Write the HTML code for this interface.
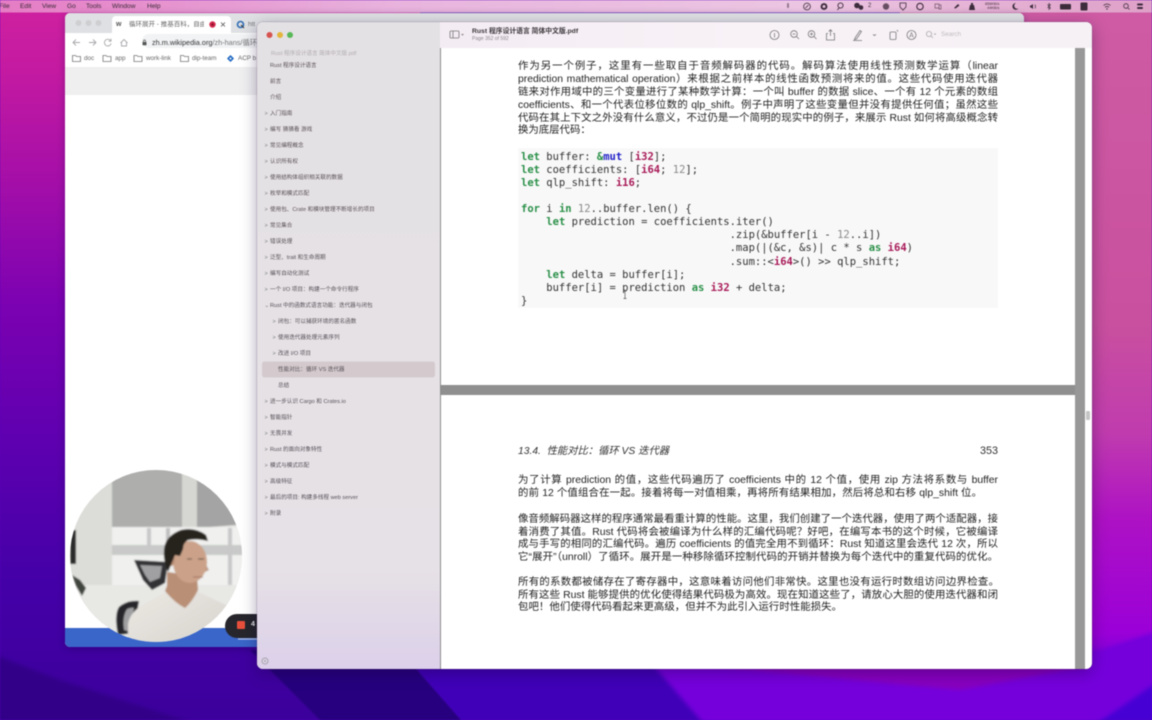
<!DOCTYPE html>
<html lang="zh"><head><meta charset="utf-8"><title>Rust PDF</title>
<style>
html,body{margin:0;padding:0;width:1152px;height:720px;overflow:hidden;background:#5a00c0}
#w{position:absolute;left:0;top:0;width:1152px;height:720px;overflow:hidden;filter:blur(.42px);font-family:"Liberation Sans","Noto Sans CJK SC",sans-serif}
.a{position:absolute;white-space:nowrap}
.l{position:absolute;left:518px;width:480px;height:13px;margin-top:1.3px;line-height:13px;font-size:10.4px;color:#222;white-space:nowrap;text-align:justify;text-align-last:justify}
.s{position:absolute;left:270px;height:10px;margin-top:1px;line-height:10px;font-size:5.6px;color:#555055;white-space:nowrap}
.s i{position:absolute;left:-5.500px;top:0;font-style:normal;font-size:5.500px;color:#777}
.s.u{left:278px}
.s.n{left:278px}
pre{position:absolute;left:521px;top:150.800px;margin:0;font:10.5px/13.1px "DejaVu Sans Mono","Liberation Mono",monospace;color:#333}
b.g{color:#2a9048;font-weight:700}b.m{color:#a81a58;font-weight:700}b.b{color:#2222c8;font-weight:700}u{text-decoration:none;color:#8a8a8a}
.ic{position:absolute;left:0;top:0}
</style></head><body><div id="w">
<svg class="ic" width="1152" height="720" viewBox="0 0 1152 720">
<defs>
<linearGradient id="lf" x1="0" y1="0" x2="0" y2="1"><stop offset="0" stop-color="#d022a0"/><stop offset=".1" stop-color="#c41aa2"/><stop offset=".25" stop-color="#a50fa8"/><stop offset=".42" stop-color="#7c02b2"/><stop offset=".6" stop-color="#6000b0"/><stop offset=".8" stop-color="#4500a8"/><stop offset="1" stop-color="#3c009c"/></linearGradient>
<linearGradient id="rt" x1="0" y1="0" x2="0" y2="1"><stop offset="0" stop-color="#cf5ca4"/><stop offset=".45" stop-color="#c9509f"/><stop offset=".6" stop-color="#c03cae"/><stop offset=".72" stop-color="#ae12c4"/><stop offset=".88" stop-color="#9a00d8"/><stop offset=".96" stop-color="#5a00d8"/><stop offset="1" stop-color="#4800d0"/></linearGradient>
<linearGradient id="mb" x1="0" y1="0" x2="1" y2="0"><stop offset="0" stop-color="#e57cc4"/><stop offset=".35" stop-color="#e8b4de"/><stop offset=".7" stop-color="#ecc6e2"/><stop offset="1" stop-color="#dfa0c8"/></linearGradient>
<linearGradient id="sb" x1="0" y1="0" x2="0" y2="1"><stop offset="0" stop-color="#e4e1e4"/><stop offset=".85" stop-color="#e6e1e6"/><stop offset="1" stop-color="#dcd0ea"/></linearGradient>
<linearGradient id="sh" x1="0" y1="0" x2="1" y2="1"><stop offset="0" stop-color="#ebe8e3"/><stop offset="1" stop-color="#d6d2cc"/></linearGradient>
<filter id="f3"><feGaussianBlur stdDeviation="2"/></filter><filter id="f1"><feGaussianBlur stdDeviation=".9"/></filter>
<clipPath id="cc"><circle cx="156" cy="556" r="86"/></clipPath>
</defs>
<rect width="1152" height="720" fill="#4200b0"/>
<rect width="420" height="720" fill="url(#lf)"/>
<rect x="900" width="252" height="720" fill="url(#rt)"/>
<polygon points="-5,655 60,680 215,730 -5,730" fill="#300088" filter="url(#f3)"/>
<polygon points="250,650 400,650 470,730 330,730" fill="#28007e" filter="url(#f1)"/>
<polygon points="400,650 643,650 709,730 470,730" fill="#3f00b8" filter="url(#f1)"/>
<polygon points="640,650 1100,650 1160,630 1160,700 1080,730 709,730" fill="#7400dc" filter="url(#f3)"/>
<polygon points="700,665 1092,665 960,690" fill="#8800c0" filter="url(#f3)"/>
<polygon points="1095,725 1160,680 1160,725" fill="#4600d4" filter="url(#f3)"/>
<rect width="1152" height="12.5" fill="url(#mb)"/>
</svg>

<!-- menu bar -->
<div class="a" style="left:0;top:2px;font-size:6.6px;line-height:9px;color:#3a2a38;height:9px;width:170px">
<span class="a" style="left:-1px">File</span><span class="a" style="left:20px">Edit</span><span class="a" style="left:42px">View</span><span class="a" style="left:67px">Go</span><span class="a" style="left:86px">Tools</span><span class="a" style="left:112px">Window</span><span class="a" style="left:147px">Help</span></div>
<svg class="ic" width="1152" height="13" viewBox="0 0 1152 13" fill="#3c2c3c" stroke="#3c2c3c">
<rect x="787" y="3" width="2" height="5" rx="1" opacity=".5" stroke="none"/>
<circle cx="807" cy="6.5" r="3.4" fill="none" stroke-width=".8"/><path d="M805.5 8l3-3" stroke-width=".8"/>
<circle cx="824" cy="6.5" r="3.4" stroke="none"/><circle cx="824" cy="6.5" r="1.5" fill="#e8c0dc" stroke="none"/>
<circle cx="840.500" cy="5.500" r="2.600" fill="none" stroke-width=".9"/><path d="M839 8l-1.600 2" stroke-width=".9"/>
<circle cx="857" cy="5.500" r="2.800" stroke="none"/><circle cx="861" cy="7.500" r="2.300" stroke="none"/>
<circle cx="886" cy="6.500" r="3.200" stroke="none" opacity=".75"/>
<path d="M900 3h6v4l-3 3-3-3z" fill="none" stroke-width=".8"/>
<circle cx="920" cy="6.500" r="3.200" fill="none" stroke-width="1.100"/>
<path d="M935 4h4v4h-4zM939 5h2v4h-2z" fill="none" stroke-width=".7" opacity=".7"/>
<path d="M954 8l4-4 1.500 1.500-4 3z" stroke="none"/>
<path d="M969 10l1-5h1V3h2v2h1l1 5z" stroke="none"/>
<path d="M1016 3a3.400 3.400 0 1 0 2.500 5.500 3 3 0 0 1-2.500-5.500z" stroke="none"/>
<path d="M1030 5.500h1l2-1.500v5l-2-1.500h-1z" stroke="none"/><path d="M1035 4.500q1 2 0 4" fill="none" stroke-width=".6"/>
<path d="M1047.500 4.500l3 3.500-1.500 1.500V3.500l1.500 1.500-3 3" fill="none" stroke-width=".6"/>
<rect x="1060" y="4" width="11" height="5.500" rx="1" stroke="none"/>
<rect x="1080.500" y="2.500" width="7" height="8" rx="1" stroke="none"/>
<path d="M1103.500 5.500q3.500-3 7 0M1105 7.300q2-1.700 4 0" fill="none" stroke-width=".8"/><circle cx="1107" cy="9" r=".7" stroke="none"/>
<circle cx="1126" cy="6" r="2.300" fill="none" stroke-width=".8"/><path d="M1128 8l1.500 1.500" stroke-width=".8"/>
<rect x="1137" y="3.500" width="6" height="2" rx="1" stroke="none"/><rect x="1137" y="7" width="6" height="2" rx="1" stroke="none"/>
</svg>
<div class="a" style="left:868px;top:3px;font-size:6px;line-height:7px;color:#3c2c3c">2</div>
<div class="a" style="left:985px;top:1.500px;font-size:3.800px;line-height:4.500px;color:#3c2c3c;text-align:right">856KB/s<br>44KB/s</div>

<!-- chrome window -->
<div class="a" style="left:65px;top:12.500px;width:959px;height:634px;border-radius:5px;background:#fff;overflow:hidden;box-shadow:0 2px 8px rgba(20,0,60,.3)">
 <div class="a" style="left:0;top:0;width:959px;height:20.500px;background:#dee0e3"></div>
 <div class="a" style="left:47px;top:3.500px;width:119px;height:17px;background:#fff;border-radius:4px 4px 0 0"></div>
 <div class="a" style="left:0;top:54.500px;width:959px;height:28px;background:#efeff0"></div>
 <div class="a" style="left:0;top:615.500px;width:959px;height:19px;background:#3a66c9"></div>
 <div class="a" style="left:77px;top:21px;width:500px;height:14px;border-radius:7px;background:#f1f3f4"></div>
</div>
<svg class="ic" width="260" height="70" viewBox="0 0 260 70">
<circle cx="78.500" cy="23" r="3" fill="#cfcfd2"/><circle cx="88.500" cy="23" r="3" fill="#cfcfd2"/><circle cx="98.500" cy="23" r="3" fill="#cfcfd2"/>
<circle cx="212.500" cy="24.500" r="3.200" fill="#d42a4c"/><circle cx="212.500" cy="24.500" r="1.300" fill="#8c1030"/>
<path d="M221 22.500l4 4M225 22.500l-4 4" stroke="#555" stroke-width=".8"/>
<circle cx="240.500" cy="24.500" r="3" fill="none" stroke="#2f6db5" stroke-width="1.600"/><path d="M241 25l3 3" stroke="#333" stroke-width="1"/>
<path d="M80 42.500h-7M76 39.500l-3 3 3 3" fill="none" stroke="#a8a8ac" stroke-width=".9"/>
<path d="M89 42.500h7M93 39.500l3 3-3 3" fill="none" stroke="#a8a8ac" stroke-width=".9"/>
<path d="M110.500 40.500a3.400 3.400 0 1 0 .6 3M111 38.700v2.500h-2.500" fill="none" stroke="#a8a8ac" stroke-width=".9"/>
<path d="M120.500 43l3.500-3.500 3.500 3.500M121.500 42.500v3.500h5v-3.500" fill="none" stroke="#a8a8ac" stroke-width=".9"/>
<rect x="142.500" y="42" width="4" height="3.200" rx=".5" fill="#555"/><path d="M143.500 42v-1a1 1 0 0 1 2 0v1" fill="none" stroke="#555" stroke-width=".7"/>
<g fill="none" stroke="#777" stroke-width=".8"><path d="M72.500 55.500h3l1 1h4v5h-8z"/><path d="M103 55.500h3l1 1h4v5h-8z"/><path d="M134 55.500h3l1 1h4v5h-8z"/><path d="M180.500 55.500h3l1 1h4v5h-8z"/></g>
<path d="M230.500 55l3.500 3.500-3.500 3.500-3.500-3.500z" fill="#1e66c0"/><circle cx="230.500" cy="58.500" r="1" fill="#fff"/>
</svg>
<div class="a" style="left:116px;top:20px;font-size:7px;line-height:9px;color:#555;font-weight:700">w</div>
<div class="a" style="left:129px;top:20.500px;font-size:6.500px;line-height:8px;color:#666;width:75px;overflow:hidden">循环展开 - 推基百科，自由的</div>
<div class="a" style="left:248px;top:20.500px;font-size:6.500px;line-height:8px;color:#777;">htt</div>
<div class="a" style="left:152px;top:38px;font-size:7.300px;line-height:9px;color:#333">zh.m.wikipedia.org<span style="color:#777">/zh-hans/循环</span></div>
<div class="a" style="left:0;top:54px;font-size:6.300px;line-height:9px;color:#666;width:257px;height:9px">
<span class="a" style="left:84px">doc</span><span class="a" style="left:115px">app</span><span class="a" style="left:146px">work-link</span><span class="a" style="left:192px">dip-team</span><span class="a" style="left:238px">ACP b</span></div>

<!-- camera bubble -->
<svg class="ic" width="260" height="660" viewBox="0 0 260 660">
<g clip-path="url(#cc)">
<rect x="66" y="466" width="182" height="182" fill="#e4e4e0"/>
<g filter="url(#f1)">
<rect x="66" y="466" width="46" height="180" fill="#dcdcd8"/>
<polygon points="112,466 182,466 182,527 112,527" fill="#aeafad"/>
<rect x="182" y="466" width="15" height="64" fill="#d6d6d2"/>
<polygon points="197,478 246,500 246,524 197,528" fill="#a3a4a3"/>
<rect x="112" y="527" width="134" height="58" fill="#f0f0ef"/>
<rect x="112" y="545" width="134" height="10" fill="#c8c9c8"/>
<rect x="147" y="528" width="4" height="18" fill="#c8c8c8"/><rect x="166" y="528" width="4" height="18" fill="#c0c0c0"/><rect x="228" y="528" width="4" height="58" fill="#c8c8c8"/>
<rect x="66" y="585" width="182" height="60" fill="#e8e8e5"/>
<rect x="70" y="530" width="6" height="34" fill="#2c2c2c"/>
<path d="M72 575l8 5 6 8-4 8-6-10z" fill="#40443e"/>
<polygon points="134,560 168,562 165,583 152,590 143,580" fill="#333335"/>
<polygon points="140,565 162,566 160,578 150,582 145,575" fill="#a0a0a2"/>
<path d="M118 635q-4-20 1-28 8-7 20-6l-6 32z" fill="#25252a"/>
<path d="M124 630q-2-14 3-21 5-2 7-1l-4 24z" fill="#a0a0a2"/>
<path d="M128 644l0-20q2-12 16-20l22-12 32 0 30 14-4 10-16 14-30 16-30 4z" fill="url(#sh)"/>
<path d="M167 572v14l-2 5q10 12 20 17 7-6 13-18l-1-14z" fill="#b98f76"/>
<ellipse cx="190" cy="562" rx="17" ry="21" fill="#cba289"/>
<ellipse cx="171" cy="560" rx="3.500" ry="6" fill="#b58a72"/>
<path d="M168 572q-5-12-4-22 1-14 17-20 14-3 25 5l2 6q-10-3-20-1-5 3-5 9l-3 7-5-1-3 7z" fill="#27221f"/>
<path d="M198 559h6M187 559h5" stroke="#3a2c28" stroke-width="1"/>
<path d="M206 565l3 5-4 2" fill="#c09a84"/>
<path d="M193 577h10" stroke="#a07060" stroke-width="1"/>
</g>
</g>
<rect x="225" y="614" width="45" height="24" rx="12" fill="#26262c"/>
<rect x="237" y="621" width="8" height="8" rx="1" fill="#e8503c"/>
<path d="M238 639h19" stroke="#e8eefc" stroke-width="1.200" opacity=".7"/>
</svg>
<div class="a" style="left:251px;top:620px;font-size:7px;line-height:9px;color:#eee;font-weight:700">4</div>

<!-- preview window -->
<div class="a" style="left:257px;top:22px;width:835px;height:647px;border-radius:6px;overflow:hidden;background:#fff;box-shadow:0 4px 16px rgba(20,0,50,.35),0 0 0 .5px rgba(60,30,80,.3)">
 <svg class="ic" width="184" height="647"><rect width="184" height="647" fill="url(#sb)"/></svg>
 <div class="a" style="left:183px;top:0;width:652px;height:26px;background:linear-gradient(90deg,#f4ecf3,#f8f2f7 45%,#f6f1f5)"></div>
 <div class="a" style="left:183px;top:26px;width:1.200px;height:621px;background:#8c8c8c"></div>
 <div class="a" style="left:818px;top:26px;width:10px;height:621px;background:#989898"></div>
 <div class="a" style="left:184px;top:363px;width:634px;height:10px;background:#8f8f8f"></div>
 <div class="a" style="left:829px;top:389px;width:4px;height:9px;background:#c4c4c4;border-radius:1px"></div>
</div>
<svg class="ic" width="1152" height="720" viewBox="0 0 1152 720">
<circle cx="269.500" cy="35" r="3" fill="#d6524e"/><circle cx="280" cy="35" r="3" fill="#e3b53c"/><circle cx="290" cy="35" r="3" fill="#58b858"/>
<rect x="262" y="361.500" width="173" height="16" rx="2.500" fill="#d4cace"/>
<circle cx="265" cy="661" r="3" fill="none" stroke="#999" stroke-width=".8"/><circle cx="265" cy="661" r="1" fill="#aaa"/>
<g fill="none" stroke="#777" stroke-width=".8">
<rect x="450" y="31" width="9" height="7" rx="1"/><path d="M453 31v7"/><path d="M461.500 34l1 1 1-1"/>
<circle cx="774.500" cy="35" r="4.500"/><path d="M774.500 33v4.500"/>
<circle cx="794" cy="34" r="3.300"/><path d="M796.500 36.500l2.500 2.500M792.500 34h3"/>
<circle cx="811.500" cy="34" r="3.300"/><path d="M814 36.500l2.500 2.500M810 34h3M811.500 32.500v3"/>
<path d="M828 33.500h-1.500v6.500h8v-6.500h-1.500M830.500 36v-6M828.700 31.500l1.800-1.800 1.800 1.800"/>
<path d="M855 38l5-7.500 1.500 1-5 7.500-2 .5zM853 40.500h9"/><path d="M873 34.500l1.500 1 1.500-1"/>
<rect x="890" y="32" width="6" height="7.500" rx="1"/><path d="M897 30l1 1.500"/>
<circle cx="911.500" cy="35" r="4.500"/><path d="M909.500 37.500l2-5 2 5M910.200 36h2.600" stroke-width=".6"/>
<circle cx="929" cy="34" r="2.600" stroke="#aaa"/><path d="M931 36l2 2M934 33.500l1 1 1-1" stroke="#aaa"/>
</g>
<rect x="518" y="148" width="480" height="160" fill="#f8f8f8"/>
</svg>
<div class="a" style="left:472px;top:27.500px;font-size:6.800px;line-height:8px;color:#3a363a;font-weight:700">Rust 程序设计语言 简体中文版.pdf</div>
<div class="a" style="left:472px;top:35.500px;font-size:5px;line-height:6px;color:#8a868a">Page 352 of 592</div>
<div class="a" style="left:941px;top:30.500px;font-size:6.300px;line-height:8px;color:#bbb">Search</div>

<!-- sidebar -->
<div class="s" style="left:271px;top:48px;color:#b0acb0">Rust 程序设计语言 简体中文版.pdf</div>
<div class="s" style="top:60px">Rust 程序设计语言</div>
<div class="s" style="top:76px">前言</div>
<div class="s" style="top:92px">介绍</div>
<div class="s" style="top:108px"><i>&gt;</i>入门指南</div>
<div class="s" style="top:124px"><i>&gt;</i>编写 猜猜看 游戏</div>
<div class="s" style="top:140px"><i>&gt;</i>常见编程概念</div>
<div class="s" style="top:156px"><i>&gt;</i>认识所有权</div>
<div class="s" style="top:172px"><i>&gt;</i>使用结构体组织相关联的数据</div>
<div class="s" style="top:188px"><i>&gt;</i>枚举和模式匹配</div>
<div class="s" style="top:204px"><i>&gt;</i>使用包、Crate 和模块管理不断增长的项目</div>
<div class="s" style="top:220px"><i>&gt;</i>常见集合</div>
<div class="s" style="top:236px"><i>&gt;</i>错误处理</div>
<div class="s" style="top:252px"><i>&gt;</i>泛型、trait 和生命周期</div>
<div class="s" style="top:268px"><i>&gt;</i>编写自动化测试</div>
<div class="s" style="top:284px"><i>&gt;</i>一个 I/O 项目：构建一个命令行程序</div>
<div class="s" style="top:300px"><i>⌄</i>Rust 中的函数式语言功能：迭代器与闭包</div>
<div class="s u" style="top:316px"><i>&gt;</i>闭包：可以捕获环境的匿名函数</div>
<div class="s u" style="top:332px"><i>&gt;</i>使用迭代器处理元素序列</div>
<div class="s u" style="top:348px"><i>&gt;</i>改进 I/O 项目</div>
<div class="s n" style="top:364px">性能对比：循环 VS 迭代器</div>
<div class="s n" style="top:380px">总结</div>
<div class="s" style="top:396px"><i>&gt;</i>进一步认识 Cargo 和 Crates.io</div>
<div class="s" style="top:412px"><i>&gt;</i>智能指针</div>
<div class="s" style="top:428px"><i>&gt;</i>无畏并发</div>
<div class="s" style="top:444px"><i>&gt;</i>Rust 的面向对象特性</div>
<div class="s" style="top:460px"><i>&gt;</i>模式与模式匹配</div>
<div class="s" style="top:476px"><i>&gt;</i>高级特征</div>
<div class="s" style="top:492px"><i>&gt;</i>最后的项目: 构建多线程 web server</div>
<div class="s" style="top:508px"><i>&gt;</i>附录</div>

<!-- page text -->
<div class="l" style="top:59px">作为另一个例子，这里有一些取自于音频解码器的代码。解码算法使用线性预测数学运算（linear</div>
<div class="l" style="top:72px">prediction mathematical operation）来根据之前样本的线性函数预测将来的值。这些代码使用迭代器</div>
<div class="l" style="top:85px">链来对作用域中的三个变量进行了某种数学计算：一个叫 buffer 的数据 slice、一个有 12 个元素的数组</div>
<div class="l" style="top:97.500px">coefficients、和一个代表位移位数的 qlp_shift。例子中声明了这些变量但并没有提供任何值；虽然这些</div>
<div class="l" style="top:110.500px">代码在其上下文之外没有什么意义，不过仍是一个简明的现实中的例子，来展示 Rust 如何将高级概念转</div>
<div class="l" style="top:123px;width:67px">换为底层代码：</div>

<pre><b class="g">let</b> buffer: <b class="g">&amp;</b><b class="b">mut</b> [<b class="m">i32</b>];
<b class="g">let</b> coefficients: [<b class="m">i64</b>; <u>12</u>];
<b class="g">let</b> qlp_shift: <b class="m">i16</b>;

<b class="g">for</b> i <b class="g">in</b> <u>12</u>..buffer.len() {
    <b class="g">let</b> prediction = coefficients.iter()
                                 .zip(&amp;buffer[i - <u>12</u>..i])
                                 .map(|(&amp;c, &amp;s)| c * s <b class="g">as</b> <b class="m">i64</b>)
                                 .sum::&lt;<b class="m">i64</b>&gt;() &gt;&gt; qlp_shift;
    <b class="g">let</b> delta = buffer[i];
    buffer[i] = prediction <b class="g">as</b> <b class="m">i32</b> + delta;
}</pre>
<svg class="ic" width="1152" height="720" viewBox="0 0 1152 720"><path d="M623.500 291h3M623.500 298.500h3M625 291v7.500" stroke="#555" stroke-width=".7" fill="none"/></svg>

<div class="a" style="left:518px;top:444.500px;font-size:10.300px;line-height:13px;color:#333;font-style:italic">13.4.&nbsp; 性能对比：循环 VS 迭代器</div>
<div class="a" style="left:978px;top:444.500px;width:20px;text-align:right;font-size:10.800px;line-height:13px;color:#333">353</div>
<div class="l" style="top:473px">为了计算 prediction 的值，这些代码遍历了 coefficients 中的 12 个值，使用 zip 方法将系数与 buffer</div>
<div class="l" style="top:486px;width:464px">的前 12 个值组合在一起。接着将每一对值相乘，再将所有结果相加，然后将总和右移 qlp_shift 位。</div>
<div class="l" style="top:511.500px">像音频解码器这样的程序通常最看重计算的性能。这里，我们创建了一个迭代器，使用了两个适配器，接</div>
<div class="l" style="top:524.500px">着消费了其值。Rust 代码将会被编译为什么样的汇编代码呢？好吧，在编写本书的这个时候，它被编译</div>
<div class="l" style="top:537px">成与手写的相同的汇编代码。遍历 coefficients 的值完全用不到循环：Rust 知道这里会迭代 12 次，所以</div>
<div class="l" style="top:549.500px">它“展开”（unroll）了循环。展开是一种移除循环控制代码的开销并替换为每个迭代中的重复代码的优化。</div>
<div class="l" style="top:574.500px;width:481px">所有的系数都被储存在了寄存器中，这意味着访问他们非常快。这里也没有运行时数组访问边界检查。</div>
<div class="l" style="top:587.500px">所有这些 Rust 能够提供的优化使得结果代码极为高效。现在知道这些了，请放心大胆的使用迭代器和闭</div>
<div class="l" style="top:600px;width:324px">包吧！他们使得代码看起来更高级，但并不为此引入运行时性能损失。</div>
</div></body></html>
